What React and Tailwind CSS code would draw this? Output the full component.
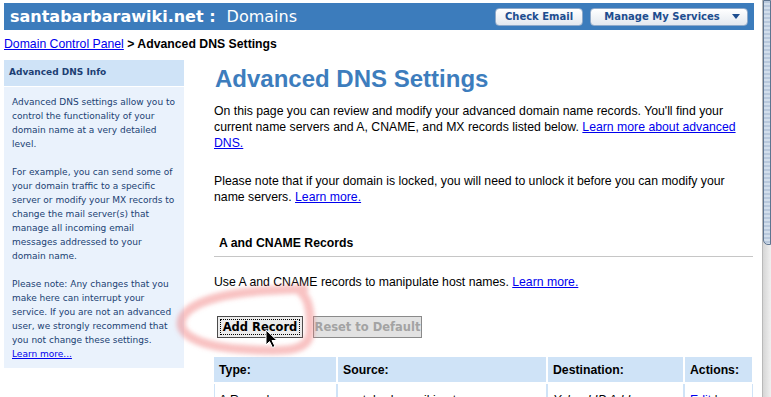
import React from "react";

const sans = { fontFamily: '"Liberation Sans", Arial, sans-serif' };
const verdana = { fontFamily: '"DejaVu Sans", Verdana, sans-serif' };

// Sidebar copy, broken the way the original wraps it
const infoLines = [
  ["Advanced DNS settings allow you to", "control the functionality of your", "domain name at a very detailed", "level."],
  ["For example, you can send some of", "your domain traffic to a specific", "server or modify your MX records to", "change the mail server(s) that", "manage all incoming email", "messages addressed to your", "domain name."],
  ["Please note: Any changes that you", "make here can interrupt your", "service. If you are not an advanced", "user, we strongly recommend that", "you not change these settings."],
];

function HeaderButton({ className, children }) {
  return (
    <button
      style={verdana}
      className={`h-[18px] rounded-[4px] border border-[#8fa9c9] bg-gradient-to-b from-white to-[#e3e8ef] text-[10px] font-bold text-[#1d4d8f] flex items-center justify-center ${className}`}
    >
      {children}
    </button>
  );
}

function Scrollbar() {
  return (
    <div className="w-[9px] flex-none border-l border-[#b9b9b9] bg-gradient-to-r from-[#d6d6d6] to-[#f0f0f0] flex flex-col">
      <div className="h-[245px] rounded-bl-[5px] border border-[#5f7590] bg-[repeating-linear-gradient(180deg,#b8c8dc_0px,#b8c8dc_2px,#d2deeb_2px,#d2deeb_4px)]" />
    </div>
  );
}

export default function App() {
  return (
    <div className="relative flex w-[771px] h-[397px] overflow-hidden bg-white text-black">
      <div className="w-[762px] flex-none pt-[3px] pl-[4px]">
        {/* Top bar */}
        <div className="w-[750px] h-[27px] bg-[#3c7cbc] flex items-center justify-between pl-[6px] pr-[6px]">
          <div style={verdana} className="text-white text-[16px] leading-none flex items-center">
            <span className="font-bold">santabarbarawiki.net :</span>
            <span className="ml-[11px]">Domains</span>
          </div>
          <div className="flex gap-[7px]">
            <HeaderButton className="w-[88px]">Check Email</HeaderButton>
            <HeaderButton className="w-[158px]">
              <span className="ml-[6px] mr-[12px]">Manage My Services</span>
              <svg width="8" height="5" viewBox="0 0 8 5"><path d="M0 0h8L4 5z" fill="#1d4d8f" /></svg>
            </HeaderButton>
          </div>
        </div>

        {/* Breadcrumb */}
        <div style={sans} className="mt-[6px] text-[12.25px] leading-4">
          <a href="#" className="text-[#0000ee] underline">Domain Control Panel</a>
          <span className="font-bold"> &gt; Advanced DNS Settings</span>
        </div>

        <div className="flex mt-[8px]">
          {/* Sidebar */}
          <div className="w-[180px] flex-none">
            <div style={verdana} className="h-[26px] bg-[#cfe3f7] flex items-center pl-[5px] text-[9px] font-bold text-[#1d3f74]">
              Advanced DNS Info
            </div>
            <div style={verdana} className="mt-[1px] bg-[#eaf2fc] pt-[8px] pb-[7px] pl-[8px] text-[9px] leading-[14px] text-[#203f73]">
              {infoLines.map((para, i) => (
                <p key={i} className={i > 0 ? "mt-[14px]" : ""}>
                  {para.map((line, j) => (
                    <span key={j} className="block whitespace-nowrap">{line}</span>
                  ))}
                  {i === 2 && <a href="#" className="block text-[#0000ee] underline">Learn more...</a>}
                </p>
              ))}
            </div>
          </div>

          {/* Main content */}
          <div style={sans} className="ml-[30px] w-[539px] flex-none text-[12.25px] leading-4">
            <h1 className="mt-[5px] ml-[1px] text-[24px] leading-[28px] font-bold text-[#3d7dbd]">Advanced DNS Settings</h1>
            <p className="mt-[10px] whitespace-nowrap">
              On this page you can review and modify your advanced domain name records. You'll find your<br />
              current name servers and A, CNAME, and MX records listed below.{" "}
              <a href="#" className="text-[#0000ee] underline">Learn more about advanced<br />DNS.</a>
            </p>
            <p className="mt-[22px] whitespace-nowrap">
              Please note that if your domain is locked, you will need to unlock it before you can modify your<br />
              name servers. <a href="#" className="text-[#0000ee] underline">Learn more.</a>
            </p>

            <h2 className="mt-[30px] pl-[5px] pb-[5px] border-b border-[#c6c6c6] font-bold">A and CNAME Records</h2>
            <p className="mt-[17px]">
              Use A and CNAME records to manipulate host names. <a href="#" className="text-[#0000ee] underline">Learn more.</a>
            </p>

            <div style={verdana} className="mt-[26px] ml-[3px] flex gap-[10px] text-[11.5px] font-bold">
              <button className="w-[86px] h-[22px] border border-[#4a4a4a] bg-[#ececec] p-[2px]">
                <span className="flex h-full items-center justify-center border border-dotted border-black">Add Record</span>
              </button>
              <button className="w-[109px] h-[22px] border border-[#8a8a8a] bg-[#e2e2e2] text-[#a3a3a3]">Reset to Default</button>
            </div>

            {/* Records table */}
            <div className="mt-[19px]">
              <div className="grid grid-cols-[122px_208px_135px_67px] gap-x-[2px] font-bold">
                <div className="h-[25px] bg-[#cfe3f7] flex items-center pl-[5px]">Type:</div>
                <div className="h-[25px] bg-[#cfe3f7] flex items-center pl-[5px]">Source:</div>
                <div className="h-[25px] bg-[#cfe3f7] flex items-center pl-[5px]">Destination:</div>
                <div className="h-[25px] bg-[#cfe3f7] flex items-center pl-[5px]">Actions:</div>
              </div>
              <div className="mt-[2px] bg-[#cfe3f7] pl-[1px] grid grid-cols-[121px_208px_135px_67px] gap-x-[2px]">
                <div className="h-[25px] bg-white pl-[4px] pt-[8px]">A Record</div>
                <div className="h-[25px] bg-white pl-[5px] pt-[8px]">santabarbarawiki.net</div>
                <div className="h-[25px] bg-white pl-[5px] pt-[8px] italic">Yahoo! IP Address</div>
                <div className="h-[25px] bg-white pl-[5px] pt-[8px]"><a href="#" className="text-[#0000ee]">Edit</a> |</div>
              </div>
            </div>
          </div>
        </div>
      </div>

      <Scrollbar />

      {/* Hand-drawn highlight and mouse pointer over the screenshot */}
      <svg className="absolute left-0 top-0 pointer-events-none" width="771" height="397">
        <defs>
          <filter id="soft" x="-20%" y="-20%" width="140%" height="140%">
            <feGaussianBlur stdDeviation="2" />
          </filter>
        </defs>
        <path
          d="M304 289 C255 290 200 294 184 315 C172 333 198 346 240 349 C282 352 310 353 310 331 C311 312 309 299 300 291"
          fill="none"
          stroke="#f07a7a"
          strokeOpacity="0.45"
          strokeWidth="9"
          strokeLinecap="round"
          filter="url(#soft)"
        />
        <path
          d="M266 330 L266 345 L269.5 341.5 L272.5 347.5 L275 346.3 L272 340.5 L277 340.5 Z"
          fill="#000"
          stroke="#fff"
          strokeWidth="1"
          strokeLinejoin="round"
        />
      </svg>
    </div>
  );
}
